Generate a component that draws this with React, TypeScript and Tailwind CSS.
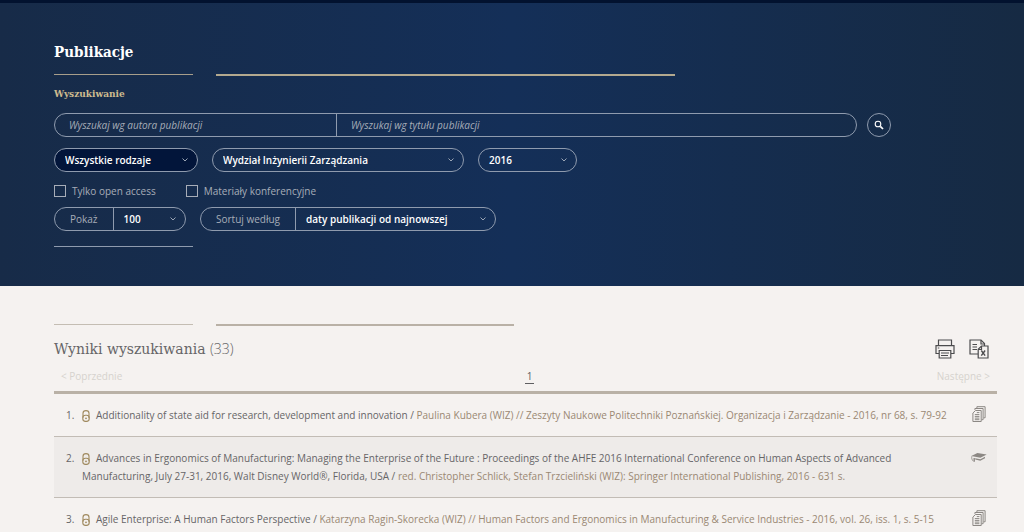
import type { ReactNode } from "react";
import { useState } from "react";

type Publication = {
  title: string;
  details: string;
  kind: "article" | "book";
};

const publications: Publication[] = [
  {
    title: "Additionality of state aid for research, development and innovation",
    details:
      "Paulina Kubera (WIZ) // Zeszyty Naukowe Politechniki Poznańskiej. Organizacja i Zarządzanie - 2016, nr 68, s. 79-92",
    kind: "article",
  },
  {
    title:
      "Advances in Ergonomics of Manufacturing: Managing the Enterprise of the Future : Proceedings of the AHFE 2016 International Conference on Human Aspects of Advanced Manufacturing, July 27-31, 2016, Walt Disney World®, Florida, USA",
    details:
      "red. Christopher Schlick, Stefan Trzcieliński (WIZ): Springer International Publishing, 2016 - 631 s.",
    kind: "book",
  },
  {
    title: "Agile Enterprise: A Human Factors Perspective",
    details:
      "Katarzyna Ragin-Skorecka (WIZ) // Human Factors and Ergonomics in Manufacturing & Service Industries - 2016, vol. 26, iss. 1, s. 5-15",
    kind: "article",
  },
];

function ChevronIcon() {
  return (
    <svg
      viewBox="0 0 8 6"
      className="pointer-events-none absolute right-2 top-1/2 h-1.5 w-2 -translate-y-1/2 text-[#9aa5b5]"
      fill="none"
      stroke="currentColor"
    >
      <path d="M1.5 1.5 4 4l2.5-2.5" />
    </svg>
  );
}

function SearchIcon() {
  return (
    <svg viewBox="0 0 12 12" className="h-3 w-3" fill="none" stroke="currentColor">
      <circle cx="5" cy="5" r="2.8" strokeWidth="1.1" />
      <path d="m7.3 7.3 2.7 2.7" strokeWidth="1.7" />
    </svg>
  );
}

function PrinterIcon() {
  return (
    <svg viewBox="0 0 20 20" className="h-5 w-5" fill="none" stroke="currentColor" strokeWidth="1.2">
      <path d="M3.5 6.5V1h13v5.5" />
      <path d="M4 14.5H1V6.7h18v7.8h-3" />
      <path d="M4.2 11.5h11.6V19H4.2z" />
      <path d="M6 14h8M6 16.5h7M2.8 9h1.5" />
    </svg>
  );
}

function ExportIcon() {
  return (
    <svg viewBox="0 0 20 20" className="h-5 w-5" fill="none" stroke="currentColor" strokeWidth="1.2">
      <path d="M9 15H1V1h11l3.5 3.5V7" />
      <path d="M12 1v4h3.5" />
      <path d="M3.5 5.5H8M3.5 8H8M3.5 10.5H8" />
      <path d="M12.5 7H19v12H9.2v-8.7z" />
      <path d="M12.5 7v3.5H9.2" />
      <path d="m12.3 11.5 3.8 5.2M16.1 11.5l-3.8 5.2" strokeWidth="1.4" />
    </svg>
  );
}

function OpenAccessIcon() {
  return (
    <svg
      viewBox="0 0 8 12"
      className="mr-1.5 inline h-3 w-2 align-[-3px] text-[#a08a5f]"
      fill="none"
      stroke="currentColor"
    >
      <path d="M1 7.8V3.2C1 1.5 2.3.6 4 .6s3 .9 3 2.6v5" strokeWidth="1.1" />
      <rect x="0.8" y="5.2" width="6.4" height="6.2" rx="2.6" strokeWidth="1.1" />
      <circle cx="4" cy="8.3" r="0.9" fill="currentColor" stroke="none" />
    </svg>
  );
}

function ArticleIcon() {
  return (
    <svg viewBox="0 0 14 16" className="h-4 w-3.5" fill="none" stroke="currentColor" strokeWidth="1">
      <path d="M3.5 4.5h5.7v11H.9V7z" />
      <path d="M2.9 3.9V2.5h8.2v11.2H9.6" />
      <path d="M4.9 2.2V.7h8.2v11.1h-1.5" />
      <path d="M4.8 6.6h2.6M2.8 8.6h4.6M2.8 10.4h4.6M2.8 12.1h4.6M2.8 13.7h4.6" />
    </svg>
  );
}

function BookIcon() {
  return (
    <svg viewBox="0 0 16 11" className="h-[11px] w-4" fill="currentColor">
      <path d="M.3 4 6.4 1l9.3 1.4-6.3 3.4z" />
      <path d="m4.2 6.2 5.2 1 4.6-2.4v1.4L9.3 8.7 4.2 7.6z" />
      <path d="M.9 4.2C.3 6 .9 8 2.4 9.2" fill="none" stroke="currentColor" strokeWidth="0.8" />
      <path d="M3.2 6v3.8" fill="none" stroke="currentColor" strokeWidth="1.4" />
    </svg>
  );
}

function SelectBox({ id, label, options }: { id: string; label: string; options: string[] }) {
  return (
    <div className="relative h-full w-full">
      <select
        id={id}
        aria-label={label}
        className="h-full w-full appearance-none rounded-full bg-transparent pl-2.5 pr-6 font-[550] text-white outline-none"
      >
        {options.map((option) => (
          <option key={option} className="text-black">
            {option}
          </option>
        ))}
      </select>
      <ChevronIcon />
    </div>
  );
}

function Checkbox({ children }: { children: ReactNode }) {
  return (
    <label className="flex items-center gap-1.5 text-[#a7adb8]">
      <input
        type="checkbox"
        className="h-3 w-3 appearance-none border border-[#a7adb8] checked:bg-[#a7adb8]"
      />
      {children}
    </label>
  );
}

export default function App() {
  const [author, setAuthor] = useState("");
  const [title, setTitle] = useState("");

  return (
    <div className="min-h-screen bg-[#f5f2f0] font-['Open_Sans',sans-serif] text-[10px] leading-[18px] text-[#666567]">
      <header className="border-t-[3px] border-[#02122f] bg-linear-to-r from-[#172b48] via-[#142f58] to-[#162a43] pb-[39px] pl-[54px] pr-[27px] pt-[37px]">
        <h1 className="font-['DejaVu_Serif_Condensed','DejaVu_Serif',serif] text-[15px] font-bold leading-6 text-white">
          Publikacje
        </h1>
        <div className="mt-2.5 flex gap-[23px]">
          <div className="h-px w-[139px] bg-[#a79e8b]" />
          <div className="h-0.5 w-[459px] bg-[#b3a98f]" />
        </div>

        <form onSubmit={(e) => e.preventDefault()}>
          <h2 className="mt-[9px] font-['DejaVu_Serif_Condensed','DejaVu_Serif',serif] text-[10px] font-bold leading-[18px] text-[#cdbb8f]">
            Wyszukiwanie
          </h2>

          <div className="mt-2.5 flex items-center gap-2.5">
            <div className="flex h-6 w-[803px] rounded-full border border-[#8f9bae]">
              <input
                type="text"
                aria-label="Autor publikacji"
                value={author}
                onChange={(e) => setAuthor(e.target.value)}
                placeholder="Wyszukaj wg autora publikacji"
                className="w-[282px] border-r border-[#8f9bae] px-3.5 italic text-white outline-none placeholder:text-[#a7adb8]"
              />
              <input
                type="text"
                aria-label="Tytuł publikacji"
                value={title}
                onChange={(e) => setTitle(e.target.value)}
                placeholder="Wyszukaj wg tytułu publikacji"
                className="min-w-0 flex-1 px-3.5 italic text-white outline-none placeholder:text-[#a7adb8]"
              />
            </div>
            <button
              type="submit"
              aria-label="Szukaj"
              className="flex h-6 w-6 items-center justify-center rounded-full border border-[#8f9bae] text-white"
            >
              <SearchIcon />
            </button>
          </div>

          <div className="mt-[11px] flex gap-3.5">
            <div className="h-6 w-36 rounded-full border border-[#8f9bae] bg-[#02153a]">
              <SelectBox id="kind" label="Rodzaj" options={["Wszystkie rodzaje", "Artykuły"]} />
            </div>
            <div className="h-6 w-[252px] rounded-full border border-[#8f9bae]">
              <SelectBox id="faculty" label="Wydział" options={["Wydział Inżynierii Zarządzania"]} />
            </div>
            <div className="h-6 w-[99px] rounded-full border border-[#8f9bae]">
              <SelectBox id="year" label="Rok" options={["2016", "2015"]} />
            </div>
          </div>

          <div className="mt-2.5 flex gap-[30px]">
            <Checkbox>Tylko open access</Checkbox>
            <Checkbox>Materiały konferencyjne</Checkbox>
          </div>

          <div className="mt-[7px] flex gap-3.5">
            <div className="flex h-6 w-[132px] rounded-full border border-[#8f9bae]">
              <label
                htmlFor="limit"
                className="flex shrink-0 items-center border-r border-[#8f9bae] px-[15px] text-[#a7adb8]"
              >
                Pokaż
              </label>
              <SelectBox id="limit" label="Pokaż" options={["100", "50", "20"]} />
            </div>
            <div className="flex h-6 w-[296px] rounded-full border border-[#8f9bae]">
              <label
                htmlFor="sort"
                className="flex shrink-0 items-center border-r border-[#8f9bae] px-[15px] text-[#a7adb8]"
              >
                Sortuj według
              </label>
              <SelectBox id="sort" label="Sortuj według" options={["daty publikacji od najnowszej"]} />
            </div>
          </div>
        </form>
        <div className="mt-[15px] h-px w-[139px] bg-[#8f9bae]" />
      </header>

      <main className="pl-[54px] pr-[27px] pt-[38px]">
        <div className="flex gap-[23px]">
          <div className="h-px w-[139px] bg-[#c4bdb3]" />
          <div className="h-0.5 w-[298px] bg-[#b9b1a6]" />
        </div>

        <div className="mt-[11px] flex items-center justify-between">
          <h2 className="font-['DejaVu_Serif',serif] text-sm leading-6">
            Wyniki wyszukiwania <span className="font-['Open_Sans',sans-serif] font-light">(33)</span>
          </h2>
          <div className="flex gap-3.5 pr-2 text-[#4c4c4e]">
            <button type="button" aria-label="Drukuj">
              <PrinterIcon />
            </button>
            <button type="button" aria-label="Eksportuj">
              <ExportIcon />
            </button>
          </div>
        </div>

        <nav className="mt-1.5 flex items-center justify-between border-b-[3px] border-[#b9b1a6] px-[7px] pb-1.5 text-[#d6d2ce]">
          <span>&lt; Poprzednie</span>
          <a href="#1" className="border-b border-[#5f5f61] px-0.5 leading-[14px] text-[#5f5f61]">
            1
          </a>
          <span>Następne &gt;</span>
        </nav>

        <ol>
          {publications.map((pub, i) => (
            <li
              key={pub.title}
              className="flex items-start border-b border-[#c2bcb5] py-3 pl-3 pr-2 even:bg-[#eeebe9]"
            >
              <span className="w-4 shrink-0">{i + 1}.</span>
              <p className="flex-1 pr-5">
                <OpenAccessIcon />
                {pub.title} / <span className="text-[#9a8873]">{pub.details}</span>
              </p>
              <span className="flex h-4 w-5 shrink-0 items-center justify-center text-[#8c8884]">
                {pub.kind === "article" ? <ArticleIcon /> : <BookIcon />}
              </span>
            </li>
          ))}
        </ol>
      </main>
    </div>
  );
}
